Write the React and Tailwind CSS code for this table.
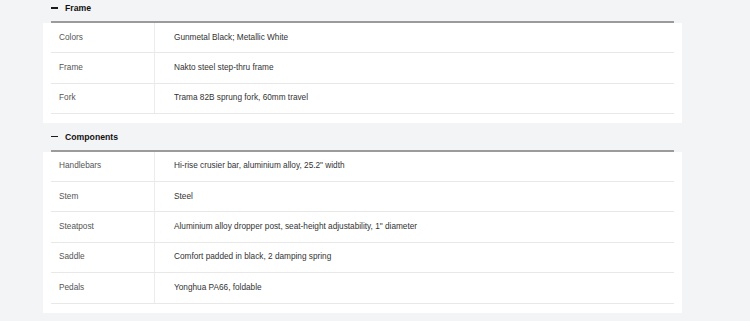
import React from 'react';

const SECTIONS = [
  {
    title: 'Frame',
    rows: [
      ['Colors', 'Gunmetal Black; Metallic White'],
      ['Frame', 'Nakto steel step-thru frame'],
      ['Fork', 'Trama 82B sprung fork, 60mm travel'],
    ],
  },
  {
    title: 'Components',
    rows: [
      ['Handlebars', 'Hi-rise crusier bar, aluminium alloy, 25.2" width'],
      ['Stem', 'Steel'],
      ['Steatpost', 'Aluminium alloy dropper post, seat-height adjustability, 1" diameter'],
      ['Saddle', 'Comfort padded in black, 2 damping spring'],
      ['Pedals', 'Yonghua PA66, foldable'],
    ],
  },
];

function SpecSection({ title, rows, first }) {
  return (
    <div className={first ? '' : 'mt-[5.5px]'}>
      <div className="px-2">
        <div className="flex items-center h-[16px]">
          <span className="block w-[7px] h-[1.5px] bg-[#1a1a1a]"></span>
          <span className="ml-[7px] text-[8.7px] font-bold text-[#111] leading-[16px]">{title}</span>
        </div>
        <div className="mt-[5px] h-[2px] bg-[#9b9b9b]"></div>
      </div>
      <div className="bg-white px-2 pb-[9px]">
        {rows.map(([label, value]) => (
          <div key={label} className="flex h-[30.4px] border-b border-[#e8e8e8]">
            <div className="w-[104px] pl-2 flex items-center border-r border-[#ececec] text-[#555]">{label}</div>
            <div className="flex-1 pl-[19px] flex items-center text-[#333]">{value}</div>
          </div>
        ))}
      </div>
    </div>
  );
}

export default function App() {
  return (
    <div className="w-[750px] h-[321px] overflow-hidden bg-[#f3f4f6] text-[8.25px]" style={{ fontFamily: '"Liberation Sans", Arial, sans-serif' }}>
      <div className="ml-[43px] w-[639px]">
        {SECTIONS.map((s, i) => (
          <SpecSection key={s.title} title={s.title} rows={s.rows} first={i === 0} />
        ))}
      </div>
    </div>
  );
}
